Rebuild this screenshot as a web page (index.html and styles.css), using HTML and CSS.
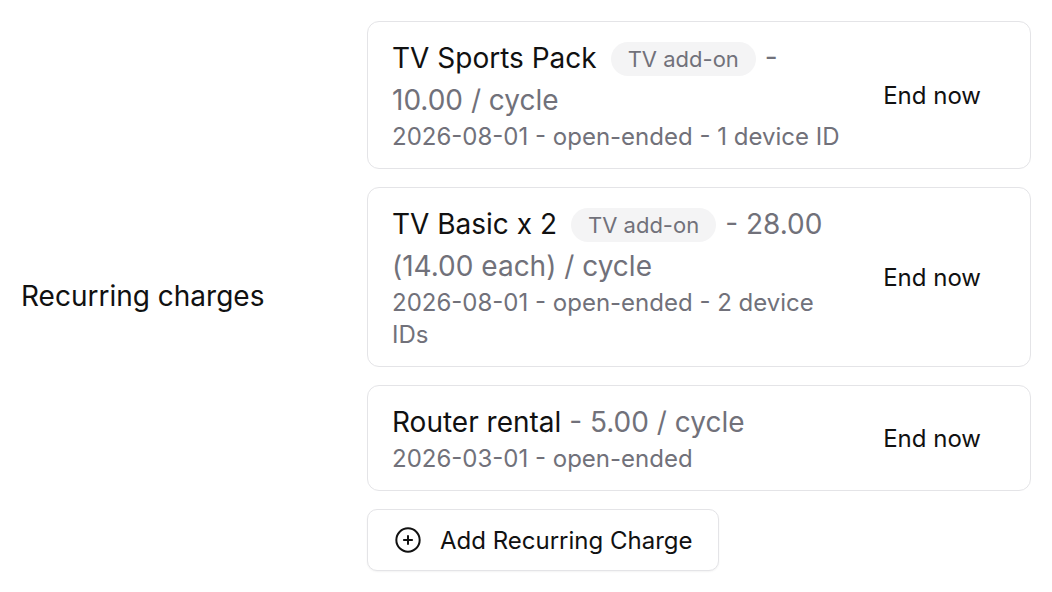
FILE: index.html
```html
<!DOCTYPE html>
<html>
<head>
<meta charset="utf-8">
<link rel="stylesheet" href="styles.css">
</head>
<body>
<div class="row">
  <div class="label">Recurring charges</div>
  <div class="list">
    <div class="card">
      <div class="info">
        <div class="title"><span class="name">TV Sports Pack</span><span class="badge">TV add-on</span><span class="price">- 10.00 / cycle</span></div>
        <div class="meta">2026-08-01 - open-ended - 1 device ID</div>
      </div>
      <button class="end">End now</button>
    </div>
    <div class="card">
      <div class="info">
        <div class="title"><span class="name">TV Basic x 2</span><span class="badge">TV add-on</span><span class="price">- 28.00 (14.00 each) / cycle</span></div>
        <div class="meta">2026-08-01 - open-ended - 2 device IDs</div>
      </div>
      <button class="end">End now</button>
    </div>
    <div class="card">
      <div class="info">
        <div class="title"><span class="name">Router rental</span> <span class="price">- 5.00 / cycle</span></div>
        <div class="meta">2026-03-01 - open-ended</div>
      </div>
      <button class="end">End now</button>
    </div>
    <div class="actions">
      <button class="add">
        <svg class="plus" width="28" height="28" viewBox="0 0 24 24" fill="none" stroke="currentColor" stroke-width="1.7" stroke-linecap="round"><circle cx="12" cy="12" r="10"/><path d="M12 8.5v7M8.5 12h7"/></svg>
        <span>Add Recurring Charge</span>
      </button>
    </div>
  </div>
</div>
</body>
</html>
```
FILE: styles.css
```css
* { box-sizing: border-box; }
html, body { margin: 0; background: #fff; }
body {
  font-family: Inter, "Noto Sans", "Liberation Sans", sans-serif;
  color: #111111;
  padding: 21px;
}
.row {
  display: grid;
  grid-template-columns: 346px 1fr;
  align-items: center;
}
.label {
  font-size: 28px;
  color: #111;
}
.list {
  display: flex;
  flex-direction: column;
  gap: 18px;
}
.card {
  display: flex;
  align-items: center;
  gap: 16px;
  border: 1px solid #e4e4e7;
  border-radius: 12px;
  padding: 15px 24px;
}
.info { flex: 1; min-width: 0; }
.title {
  font-size: 28px;
  line-height: 42px;
}
.name { color: #111; }
.price { color: #71717a; }
.badge {
  display: inline-block;
  background: #f4f4f5;
  color: #71717a;
  font-size: 22px;
  line-height: 34px;
  padding: 0 17px;
  border-radius: 17px;
  margin: 0 9px 0 14px;
  vertical-align: 1px;
}
.meta {
  font-size: 24px;
  line-height: 32px;
  color: #71717a;
}
.end {
  font: inherit;
  font-size: 24px;
  color: #111;
  background: none;
  border: none;
  padding: 8px 25px;
  white-space: nowrap;
}
.actions { display: flex; }
.add {
  font: inherit;
  font-size: 24px;
  color: #111;
  background: #fff;
  border: 1px solid #e4e4e7;
  border-radius: 10px;
  height: 62px;
  padding: 0 25px 0 26px;
  display: flex;
  align-items: center;
  gap: 18px;
  box-shadow: 0 1px 2px rgba(0,0,0,0.05);
}
.plus { display: block; }
```
